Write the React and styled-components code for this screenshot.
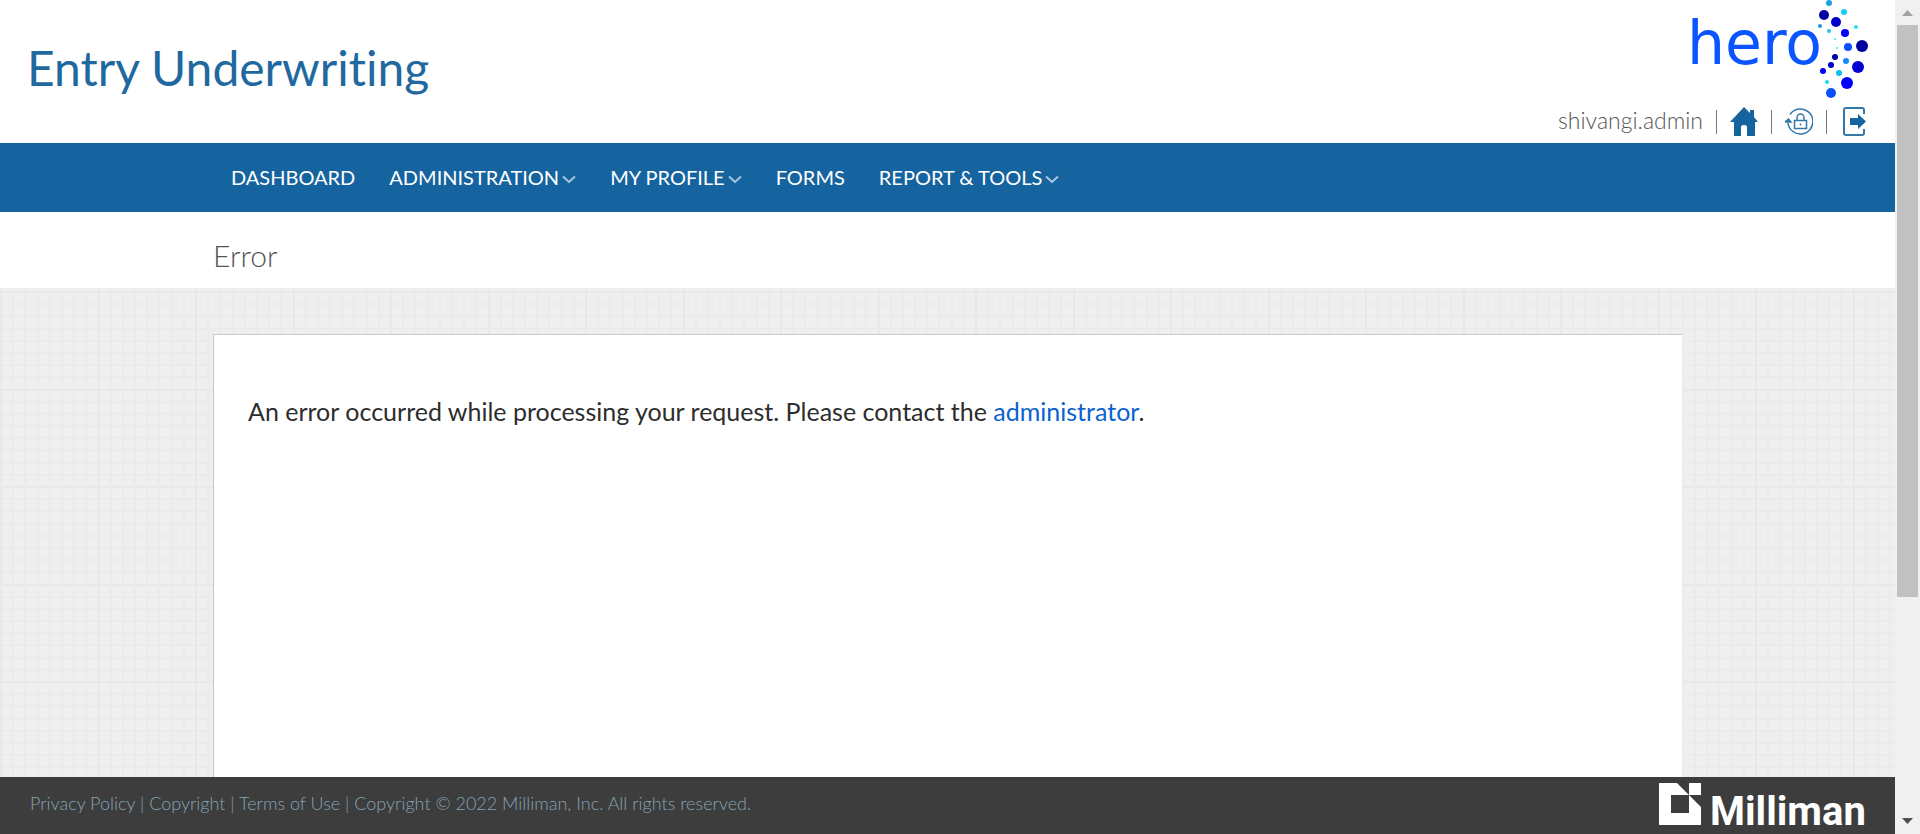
import React from "react";
import styled, { createGlobalStyle } from "styled-components";

const TILE = 195;
const STEPS = 16;

const gridLines = (direction) => {
  const stops = [];
  let previous = 0;
  for (let i = 0; i < STEPS; i += 1) {
    const start = Math.round((i * TILE) / STEPS);
    const major = i % 8 === 0;
    const end = start + 2;
    const color = major ? "#e8e8e8" : "#ebebeb";
    stops.push(`transparent ${previous}px ${start}px`, `${color} ${start}px ${end}px`);
    previous = end;
  }
  stops.push(`transparent ${previous}px ${TILE}px`);
  return `linear-gradient(${direction}, ${stops.join(", ")})`;
};

const GlobalStyle = createGlobalStyle`
  *, *::before, *::after { box-sizing: border-box; }
  body {
    margin: 0;
    background: #fff;
    color: #2d2d2d;
    font-family: Lato, "Open Sans", sans-serif;
    font-variant-ligatures: none;
  }
`;

const Viewport = styled.div`
  display: flex;
  height: 100vh;
  overflow: hidden;
`;

const Page = styled.div`
  display: flex;
  flex: 1;
  flex-direction: column;
  min-width: 0;
`;

const Header = styled.header`
  display: flex;
  justify-content: space-between;
  height: 143px;
  padding: 0 27px;
`;

const Product = styled.h1`
  margin: 0;
  padding-top: 38px;
  color: #1f69a0;
  font-size: 48px;
  font-weight: 400;
  line-height: 60px;
`;

const Account = styled.div`
  display: flex;
  flex-direction: column;
  align-items: flex-end;
`;

const HeroLogo = styled.svg`
  display: block;
  width: 180px;
  height: 100px;
  overflow: visible;
  font-family: "DejaVu Sans", sans-serif;
`;

const Tools = styled.div`
  display: flex;
  align-items: center;
  gap: 13px;
  height: 43px;
  color: #555;
  font-size: 23px;
  font-weight: 300;
  line-height: 28px;
`;

const UserName = styled.span`
  padding-bottom: 4px;
`;

const Divider = styled.span`
  width: 1px;
  height: 24px;
  background: #7d7478;
`;

const IconLink = styled.a`
  display: block;
  width: 28px;
  height: 30px;

  svg { display: block; }
`;

const NavBar = styled.nav`
  display: flex;
  align-items: center;
  height: 69px;
  padding: 0 214px 2px;
  background: #16649f;
`;

const NavLink = styled.a`
  display: flex;
  align-items: center;
  gap: 3px;
  padding: 0 17px;
  color: #fff;
  font-size: 20px;
  line-height: 28px;
  text-decoration: none;
  white-space: nowrap;

  svg { margin-top: 6px; }
`;

const TitleBar = styled.div`
  height: 76px;
  padding: 23px 213px 0;
`;

const Title = styled.h2`
  margin: 0;
  color: #555;
  font-size: 30px;
  font-weight: 300;
  line-height: 40px;
`;

const Main = styled.main`
  display: flex;
  flex: 1;
  min-height: 0;
  padding: 46px 213px 0;
  background-color: #efefef;
  background-image: ${gridLines("90deg")}, ${gridLines("180deg")};
  background-size: ${TILE}px ${TILE}px;
  background-position: 0 3px;
`;

const Card = styled.section`
  flex: 1;
  padding: 58px 34px;
  border: solid #c8c8c8;
  border-width: 1px 0 0 1px;
  background: #fff;
`;

const Message = styled.p`
  margin: 0;
  font-size: 25px;
  line-height: 36px;

  a {
    color: #0a62cf;
    text-decoration: none;
  }
`;

const Footer = styled.footer`
  display: flex;
  align-items: center;
  justify-content: space-between;
  height: 57px;
  padding: 0 28px 0 30px;
  background: #3d3d3d;
`;

const Legal = styled.p`
  margin: 0;
  padding-bottom: 6px;
  color: #86a3b5;
  font-size: 18px;
  font-weight: 300;
  line-height: 28px;

  a {
    color: inherit;
    text-decoration: none;
  }
`;

const Brand = styled.svg`
  display: block;
  width: 208px;
  height: 57px;
  font-family: Roboto, sans-serif;
`;

const ScrollTrack = styled.div`
  display: flex;
  flex-direction: column;
  align-items: center;
  width: 25px;
  background: #f0f0f0;
`;

const ScrollArrow = styled.svg`
  display: block;
  flex: none;
  width: 21px;
  height: 25px;
`;

const ScrollSpace = styled.div`
  flex: 1;
  align-self: stretch;
  padding: 0 2px;
`;

const ScrollThumb = styled.div`
  height: 73%;
  background: #c1c1c1;
`;

const DOTS = [
  [149, 3, 3, "#1ea0e0"],
  [164, 12, 3, "#14cdf0"],
  [144, 15, 5, "#0000a0"],
  [156, 22, 5, "#0000c8"],
  [140, 26, 2, "#1e96e6"],
  [176, 27, 2, "#1ee6fa"],
  [149, 31, 2, "#1ec8e6"],
  [165, 33, 4, "#0000ff"],
  [155, 39, 1, "#32e6e6"],
  [182, 46, 6, "#0000a0"],
  [168, 47, 4, "#0a50fa"],
  [157, 48, 1, "#32e6e6"],
  [155, 57, 3, "#0000a8"],
  [166, 61, 3, "#0f8cfa"],
  [151, 65, 3, "#0000c8"],
  [178, 67, 6, "#0000d2"],
  [143, 71, 3, "#0000ff"],
  [159, 73, 3, "#0abef5"],
  [147, 82, 2, "#14dcfa"],
  [167, 83, 6, "#0000ff"],
  [151, 93, 5, "#0a50fa"],
];

const NAV = [
  { label: "DASHBOARD" },
  { label: "ADMINISTRATION", menu: true },
  { label: "MY PROFILE", menu: true },
  { label: "FORMS" },
  { label: "REPORT & TOOLS", menu: true },
];

const LEGAL = ["Privacy Policy", "Copyright", "Terms of Use"];

const Hero = () => (
  <HeroLogo viewBox="8 0 180 100" role="img" aria-label="hero">
    <text x="7" y="64" fontSize="60" fill="#0a55ff">hero</text>
    {DOTS.map(([cx, cy, r, fill]) => (
      <circle key={`${cx}-${cy}`} cx={cx} cy={cy} r={r} fill={fill} />
    ))}
  </HeroLogo>
);

const HomeIcon = () => (
  <svg width="28" height="30" viewBox="0 0 28 30" fill="#16649f">
    <path d="M14 0 L20 6 V3 H24 V10 L28 15 H25 V29 H17 V20 Q17 18 14 18 Q11 18 11 20 V29 H4 V15 H0 Z" />
  </svg>
);

const LockIcon = () => (
  <svg width="28" height="30" viewBox="0 0 28 30" fill="none" stroke="#3478aa" strokeWidth="1.5">
    <path d="M5 7.5 A12.5 12.5 0 0 1 14.5 2 A12.5 12.5 0 1 1 3 16" />
    <path d="M0 15 L3.5 12 L6 15 Z" fill="#16649f" />
    <rect x="9.5" y="13.5" width="12" height="8" />
    <path d="M12 13 V10.5 A3.5 3.5 0 0 1 19 10.5 V13 M15.5 16.5 V18.5" />
  </svg>
);

const LogoutIcon = () => (
  <svg width="28" height="30" viewBox="0 0 28 30">
    <path d="M24 7 V3 Q24 1 22 1 H6 Q4 1 4 3 V26 Q4 28 6 28 H22 Q24 28 24 26 V22" fill="none" stroke="#3478aa" strokeWidth="2" />
    <path d="M10 11 H18 V7 L26 14.5 L18 22 V18 H10 Z" fill="#16649f" />
  </svg>
);

const Chevron = () => (
  <svg width="14" height="9" viewBox="0 0 14 9" fill="none" stroke="#a9c9e2" strokeWidth="2" aria-hidden="true">
    <path d="M1 1.5 L7 7 L13 1.5" />
  </svg>
);

const Milliman = () => (
  <Brand viewBox="0 0 208 57" role="img" aria-label="Milliman">
    <path fill="#fff" fillRule="evenodd" d="M0 6 H18 L30 18 L42 30 V48 H0 Z M12 18 V36 H30 V18 Z" />
    <path fill="#fff" d="M30 6 H42 V18 H30 Z" />
    <text x="51" y="48" fontSize="40" fontWeight="700" fill="#fff">Milliman</text>
  </Brand>
);

export default function App() {
  return (
    <>
      <GlobalStyle />
      <Viewport>
        <Page>
          <Header>
            <Product>Entry Underwriting</Product>
            <Account>
              <Hero />
              <Tools>
                <UserName>shivangi.admin</UserName>
                <Divider />
                <IconLink href="#home" aria-label="Home"><HomeIcon /></IconLink>
                <Divider />
                <IconLink href="#password" aria-label="Change password"><LockIcon /></IconLink>
                <Divider />
                <IconLink href="#logout" aria-label="Log out"><LogoutIcon /></IconLink>
              </Tools>
            </Account>
          </Header>
          <NavBar>
            {NAV.map(({ label, menu }) => (
              <NavLink key={label} href="#nav">
                {label}
                {menu && <Chevron />}
              </NavLink>
            ))}
          </NavBar>
          <TitleBar>
            <Title>Error</Title>
          </TitleBar>
          <Main>
            <Card>
              <Message>
                An error occurred while processing your request. Please contact the{" "}
                <a href="#administrator">administrator</a>.
              </Message>
            </Card>
          </Main>
          <Footer>
            <Legal>
              {LEGAL.map((label) => (
                <React.Fragment key={label}>
                  <a href="#legal">{label}</a>{" | "}
                </React.Fragment>
              ))}
              Copyright © 2022 Milliman, Inc. All rights reserved.
            </Legal>
            <Milliman />
          </Footer>
        </Page>
        <ScrollTrack aria-hidden="true">
          <ScrollArrow viewBox="0 0 21 25"><path d="M5 16 L10.5 10 L16 16 Z" fill="#a3a3a3" /></ScrollArrow>
          <ScrollSpace><ScrollThumb /></ScrollSpace>
          <ScrollArrow viewBox="0 0 21 25"><path d="M5 9 L10.5 15 L16 9 Z" fill="#505050" /></ScrollArrow>
        </ScrollTrack>
      </Viewport>
    </>
  );
}
